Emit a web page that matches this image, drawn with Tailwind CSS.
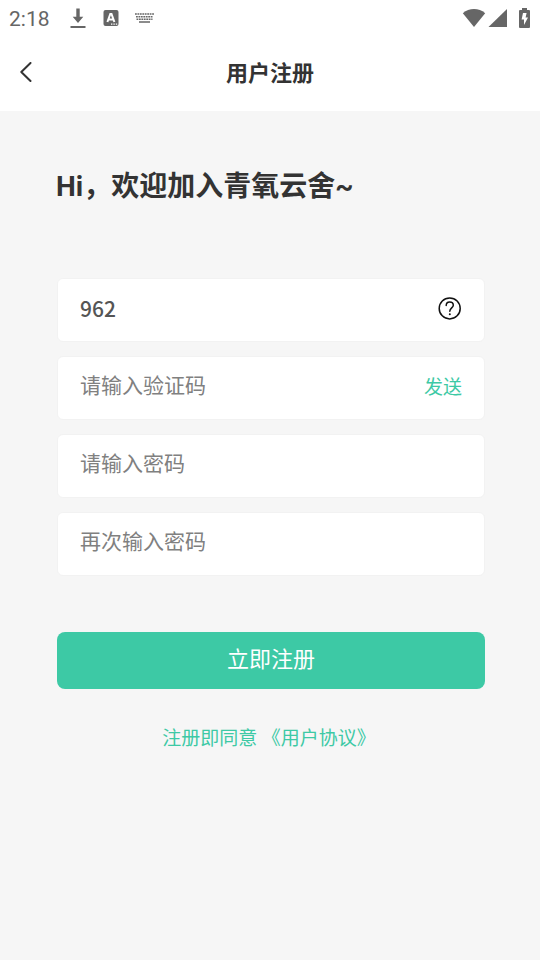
<!DOCTYPE html>
<html lang="zh-CN">
<head>
<meta charset="utf-8">
<meta name="viewport" content="width=device-width, initial-scale=1">
<title>用户注册</title>
<script src="https://cdn.jsdelivr.net/npm/@tailwindcss/browser@4"></script>
</head>
<body class="min-h-screen bg-[#f6f6f6] text-[#333333] font-['Roboto','Noto_Sans_CJK_SC',sans-serif]">
<!-- Status bar -->
<div class="flex h-9 items-center bg-white pl-[9px] pr-[10px] text-[#666666]">
  <span class="pt-[2px] text-[21px] leading-8">2:18</span>
  <svg class="ml-5 h-5 w-4" viewBox="0 0 16 20" fill="currentColor" aria-hidden="true"><path d="M6.3.5h3.4v8.3h3.6L8 14.9 2.7 8.8h3.6zM.5 18h15v2H.5z"/></svg>
  <svg class="ml-[17px] h-4 w-4" viewBox="0 0 16 16" aria-hidden="true"><rect x=".5" y="0" width="15" height="16" rx="2" fill="currentColor"/><path d="M4.4 12 7.3 4h1.2l2.9 8M5.6 9.4h4.6" fill="none" stroke="#fff" stroke-width="2"/><path d="M8 13.4h1.4v1.4H8zm2.4 0h1.4v1.4h-1.4zm2.4 0h1.4v1.4h-1.4z" fill="#fff"/></svg>
  <svg class="ml-4 h-[10px] w-[19px]" viewBox="0 0 19 10" fill="none" stroke="currentColor" aria-hidden="true"><path d="M0 1h19" stroke-width="1.7" stroke-dasharray="1.8 .65"/><path d="M1 3.7h17M1.5 6.3h16" stroke-width="1.6" stroke-dasharray="1.8 .65"/><path d="M4 9h11" stroke-width="1.5"/></svg>
  <div class="ml-auto flex items-center">
    <svg class="h-[18px] w-6" viewBox="0 0 24 18" fill="currentColor" aria-hidden="true"><path d="M12 18 .8 4.2Q5.8 0 12 0t11.2 4.2z"/></svg>
    <svg class="ml-[2px] h-[18px] w-[19px]" viewBox="0 0 19 18" fill="currentColor" aria-hidden="true"><path d="M19 0v18H.5z"/></svg>
    <svg class="ml-3 h-5 w-[11px]" viewBox="0 0 11 20" aria-hidden="true"><path d="M3 0h5v2h2q1 0 1 1v16q0 1-1 1H1q-1 0-1-1V3q0-1 1-1h2z" fill="currentColor"/><path d="M7.6 5H4L2.6 11.6H5V17l4-7.4H6.6z" fill="#fff"/></svg>
  </div>
</div>
<header class="grid grid-cols-[56px_1fr_56px] items-center bg-white pb-[3px]">
  <button type="button" aria-label="返回" class="flex h-[72px] items-center pl-5"><svg class="h-5 w-3" viewBox="0 0 12 20" fill="none" stroke="#333" stroke-width="2" stroke-linecap="round" stroke-linejoin="round" aria-hidden="true"><path d="M10.5 1 1.3 10l9.2 9"/></svg></button>
  <h1 class="pt-1 text-center text-[22px] leading-8 font-bold">用户注册</h1>
</header>
<main class="pr-[55px] pl-[57px] pt-14">
  <h2 class="-ml-px text-[28px] leading-10 font-bold">Hi，欢迎加入青氧云舍~</h2>
  <form class="mt-[71px]">
    <div class="flex flex-col gap-[14px]">
      <div class="flex h-16 items-center rounded-md border border-[#f2f2f2] bg-white px-[22px]">
        <input type="tel" value="962" aria-label="手机号" class="min-w-0 flex-1 pb-1 font-['Noto_Sans_CJK_SC',sans-serif] text-[21px] leading-8 font-medium text-[#555555] outline-none">
        <button type="button" aria-label="帮助" class="pb-1"><svg class="h-6 w-6" viewBox="0 0 24 24" fill="none" stroke="#111" stroke-width="1.5" stroke-linecap="round" aria-hidden="true"><circle cx="11.7" cy="12.4" r="10.5"/><path d="M8.2 9.5C8.2 7.3 9.7 6 11.7 6s3.6 1.3 3.6 3.2c0 2.5-3.5 2.9-3.5 6"/><circle cx="11.8" cy="18.3" r="1" fill="#111" stroke="none"/></svg></button>
      </div>
      <div class="flex h-16 items-center rounded-md border border-[#f2f2f2] bg-white px-[22px]">
        <input type="text" placeholder="请输入验证码" aria-label="验证码" class="min-w-0 flex-1 pb-1 text-[21px] leading-8 placeholder:text-[#808080] outline-none">
        <button type="button" class="text-[19px] leading-8 text-[#3dc9a5]">发送</button>
      </div>
      <div class="flex h-16 items-center rounded-md border border-[#f2f2f2] bg-white px-[22px]">
        <input type="password" placeholder="请输入密码" aria-label="密码" class="min-w-0 flex-1 pb-1 text-[21px] leading-8 placeholder:text-[#808080] outline-none">
      </div>
      <div class="flex h-16 items-center rounded-md border border-[#f2f2f2] bg-white px-[22px]">
        <input type="password" placeholder="再次输入密码" aria-label="确认密码" class="min-w-0 flex-1 pb-1 text-[21px] leading-8 placeholder:text-[#808080] outline-none">
      </div>
    </div>
    <button type="submit" class="mt-14 h-[57px] w-full rounded-lg bg-[#3dc9a5] pb-[2px] text-[22px] leading-8 text-white">立即注册</button>
  </form>
  <p class="mt-[34px] pr-1 text-center text-[19px] leading-8 text-[#3dc9a5]">注册即同意 <a href="#agreement">《用户协议》</a></p>
</main>
</body>
</html>
